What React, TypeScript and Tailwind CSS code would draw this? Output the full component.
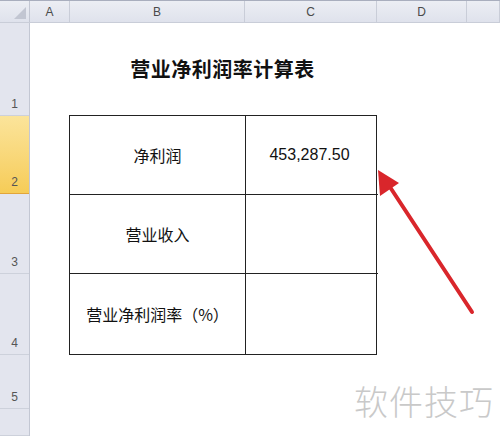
const rows = [
  { n: "1", h: "h-[93px]" },
  { n: "2", h: "h-[78px]", active: true },
  { n: "3", h: "h-[80px]" },
  { n: "4", h: "h-[81px]" },
  { n: "5", h: "h-[54px]" },
  { n: "", h: "flex-1" },
];

const cols = [
  { l: "A", w: "w-[40px]" },
  { l: "B", w: "w-[175px]" },
  { l: "C", w: "w-[132px]" },
  { l: "D", w: "w-[90px]" },
  { l: "", w: "flex-1" },
];

const cellText = "text-[16px] text-[#111] [font-family:'Noto_Sans_CJK_SC',sans-serif]";

export default function App() {
  return (
    <div className="relative w-[500px] h-[436px] overflow-hidden bg-white flex flex-col [font-family:'Liberation_Sans',Arial,sans-serif]">
      {/* column headers */}
      <div className="flex h-[23px] border-t border-[#a9aebe] border-b border-b-[#c9cdd8] bg-gradient-to-b from-[#eceef4] to-[#dfe2ec]">
        <div className="relative w-[30px] border-r border-[#c3c7d3]">
          <div className="absolute right-[3px] bottom-[3px] w-0 h-0 border-l-[12px] border-l-transparent border-b-[12px] border-b-[#c2c6d2]" />
        </div>
        {cols.map((c, i) => (
          <div
            key={i}
            className={`${c.w} flex items-center justify-center border-r border-[#c9cdd8] text-[12px] text-[#4a4a4a]`}
          >
            {c.l}
          </div>
        ))}
      </div>

      <div className="flex flex-1">
        {/* row headers */}
        <div className="w-[30px] flex flex-col border-r border-[#c3c7d3]">
          {rows.map((r, i) => (
            <div
              key={i}
              className={`${r.h} flex items-end justify-center pb-[2px] border-b text-[12px] text-[#555] ${
                r.active
                  ? "bg-gradient-to-b from-[#fbe49a] to-[#f6cc56] border-[#e2a53a] text-[#6b4a00]"
                  : "bg-[#e3e5ee] border-[#cdd1db]"
              }`}
            >
              {r.n}
            </div>
          ))}
        </div>

        {/* sheet */}
        <div className="flex-1 flex flex-col pl-[39px]">
          <div className="h-[92px] w-[307px] flex justify-center pt-[31px]">
            <span className="text-[20px] font-bold tracking-[0.5px] text-[#111] [font-family:'Noto_Sans_CJK_SC',sans-serif]">
              营业净利润率计算表
            </span>
          </div>
          <div className="w-[308px] grid grid-cols-[176px_132px] grid-rows-[79px_79px_80px] border border-[#222]">
            <div className={`flex items-center justify-center border-r border-b border-[#222] ${cellText}`}>净利润</div>
            <div className="flex items-center justify-center border-b border-[#222] text-[16px] text-[#111] pr-[5px]">
              453,287.50
            </div>
            <div className={`flex items-center justify-center border-r border-b border-[#222] ${cellText}`}>营业收入</div>
            <div className="border-b border-[#222]" />
            <div className={`flex items-center justify-center border-r border-[#222] ${cellText}`}>营业净利润率（%）</div>
            <div />
          </div>
        </div>
      </div>

      {/* annotation arrow */}
      <svg className="absolute left-0 top-0 pointer-events-none" width="500" height="436">
        <line x1="472" y1="312" x2="388" y2="184" stroke="#d9262b" strokeWidth="4" strokeLinecap="round" />
        <polygon points="378,170 380,196 399,183" fill="#d9262b" />
      </svg>

      {/* watermark */}
      <div className="absolute left-[354px] top-[375px] text-[34px] font-light text-[#c9c9c9] tracking-[1px] [font-family:'Noto_Sans_CJK_SC',sans-serif]">
        软件技巧
      </div>
    </div>
  );
}
